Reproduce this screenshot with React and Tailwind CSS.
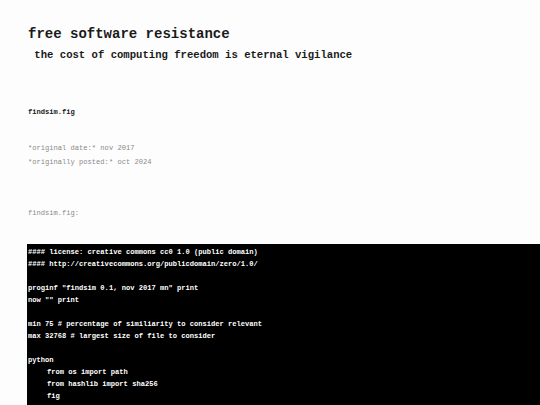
import React from 'react';

const code = `#### license: creative commons cc0 1.0 (public domain)
#### http://creativecommons.org/publicdomain/zero/1.0/

proginf "findsim 0.1, nov 2017 mn" print
now "" print

min 75 # percentage of similiarity to consider relevant
max 32768 # largest size of file to consider

python`;

const indented = ['from os import path', 'from hashlib import sha256', 'fig'];

const App = () => {
  return (
    <div className="min-h-screen overflow-hidden bg-[#fdfdfd] pl-[28px] font-['Liberation_Mono','Courier_New',monospace] text-[#1a1a1a]">
      {/* Header */}
      <h1 className="mt-[26px] text-[14px] leading-[16px] font-bold">free software resistance</h1>
      <p className="mt-[6px] whitespace-pre text-[10.6px] leading-[14px] font-bold"> the cost of computing freedom is eternal vigilance</p>

      {/* Post */}
      <h2 className="mt-[44px] text-[7.1px] leading-[12px] font-bold">findsim.fig</h2>

      <div className="mt-[23px] text-[7.1px] leading-[14px] text-[#8a8a8a]">
        <p>*original date:* nov 2017</p>
        <p>*originally posted:* oct 2024</p>
      </div>

      <p className="mt-[38px] text-[7.1px] leading-[12px] text-[#8a8a8a]">findsim.fig:</p>

      <pre className="mt-[25px] -ml-[1px] bg-black pt-[2px] pb-2 pl-[1px] text-[7.1px] leading-[12px] font-bold text-white font-['Liberation_Mono','Courier_New',monospace]">
        {code}
        {indented.map((line) => (
          <div key={line} className="pl-[19px]">{line}</div>
        ))}
      </pre>
    </div>
  );
};

export default App;
